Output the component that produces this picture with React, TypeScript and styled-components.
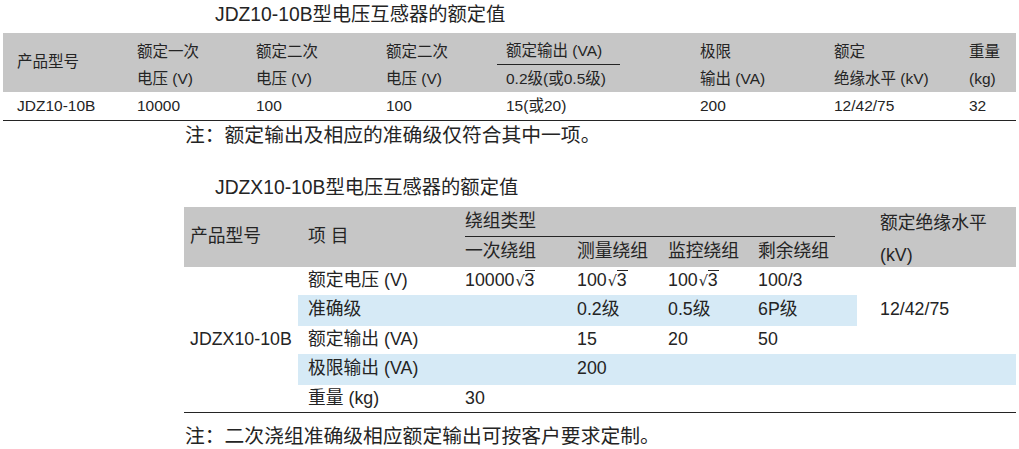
import React from "react";
import styled, { createGlobalStyle } from "styled-components";

const Global = createGlobalStyle`
  html, body { margin: 0; padding: 0; background: #ffffff; }
  body {
    font-family: "Liberation Sans", "Noto Sans CJK SC", sans-serif;
    color: #242424;
  }
`;

const GRAY = "#c6c6c6";
const BLUE = "#d6eaf6";
const INK = "#242424";

const Page = styled.div`
  width: 1019px;
  display: flex;
  flex-direction: column;
  & > * {
    flex-shrink: 0;
  }
`;

const Title = styled.div<{ $top: number; $h: number }>`
  box-sizing: border-box;
  height: ${(p) => p.$h}px;
  padding-top: ${(p) => p.$top}px;
  padding-left: 215px;
  font-size: 19.3px;
  line-height: 28px;
  white-space: nowrap;
`;

const Note = styled.div<{ $top: number; $h: number }>`
  box-sizing: border-box;
  height: ${(p) => p.$h}px;
  padding-top: ${(p) => p.$top}px;
  padding-left: 185px;
  font-size: 19.8px;
  line-height: 28px;
  white-space: nowrap;
`;

const Table = styled.table<{ $left: number; $w: number; $fs: number }>`
  margin-left: ${(p) => p.$left}px;
  width: ${(p) => p.$w}px;
  border-collapse: collapse;
  border-spacing: 0;
  table-layout: fixed;
  font-size: ${(p) => p.$fs}px;
  border-bottom: 1px solid ${INK};
`;

const HeadRow = styled.tr<{ $h: number }>`
  height: ${(p) => p.$h}px;
  background: ${GRAY};
`;

const Row = styled.tr<{ $h: number }>`
  height: ${(p) => p.$h}px;
`;

const Cell = styled.td<{ $pl?: number; $pr?: number; $pt?: number; $bg?: string }>`
  padding: ${(p) => p.$pt ?? 0}px ${(p) => p.$pr ?? 0}px 0 ${(p) => p.$pl ?? 10}px;
  vertical-align: middle;
  text-align: left;
  white-space: nowrap;
  font-weight: normal;
  line-height: 1.2;
  background: ${(p) => p.$bg ?? "transparent"};
`;

const Lines = styled.div<{ $lh: number; $mb?: number }>`
  display: flex;
  flex-direction: column;
  line-height: ${(p) => p.$lh}px;
  margin-bottom: ${(p) => p.$mb ?? 0}px;
`;

const Ruled = styled.div<{ $w?: number }>`
  width: ${(p) => (p.$w ? `${p.$w}px` : "auto")};
  border-bottom: 1px solid ${INK};
`;

const Indented = styled.div<{ $pl: number }>`
  padding-left: ${(p) => p.$pl}px;
`;

const Topline = styled.div`
  line-height: 29px;
  border-bottom: 1px solid ${INK};
`;

const Radical = styled.span`
  white-space: nowrap;
`;

const RadSign = styled.span`
  font-family: "DejaVu Sans", sans-serif;
  font-size: 0.8em;
  margin-left: 1px;
`;

const Radicand = styled.span`
  display: inline-block;
  border-top: 1px solid ${INK};
  line-height: 1.05;
  padding-right: 1px;
`;

const Sqrt: React.FC<{ n: string }> = ({ n }) => (
  <Radical>
    <RadSign>√</RadSign>
    <Radicand>{n}</Radicand>
  </Radical>
);

const T1 = [124, 119, 130, 121, 193, 134, 135, 57];
const T2 = [114, 157, 112, 91, 90, 109, 159];

export default function App() {
  return (
    <Page>
      <Global />
      <Title $top={1} $h={33}>JDZ10-10B型电压互感器的额定值</Title>

      <Table $left={3} $w={1013} $fs={15.5}>
        <colgroup>
          {T1.map((w, i) => (
            <col key={i} style={{ width: w }} />
          ))}
        </colgroup>
        <tbody>
          <HeadRow $h={59}>
            <Cell $pl={14}>产品型号</Cell>
            <Cell $pt={4}>
              <Lines $lh={27}>
                <span>额定一次</span>
                <span>电压 (V)</span>
              </Lines>
            </Cell>
            <Cell $pt={4}>
              <Lines $lh={27}>
                <span>额定二次</span>
                <span>电压 (V)</span>
              </Lines>
            </Cell>
            <Cell $pt={4}>
              <Lines $lh={27}>
                <span>额定二次</span>
                <span>电压 (V)</span>
              </Lines>
            </Cell>
            <Cell $pl={0} $pt={4}>
              <Lines $lh={27}>
                <Ruled $w={123}>
                  <Indented $pl={9}>额定输出 (VA)</Indented>
                </Ruled>
                <Indented $pl={9}>0.2级(或0.5级)</Indented>
              </Lines>
            </Cell>
            <Cell $pt={4}>
              <Lines $lh={27}>
                <span>极限</span>
                <span>输出 (VA)</span>
              </Lines>
            </Cell>
            <Cell $pt={4}>
              <Lines $lh={27}>
                <span>额定</span>
                <span>绝缘水平 (kV)</span>
              </Lines>
            </Cell>
            <Cell $pt={4}>
              <Lines $lh={27}>
                <span>重量</span>
                <span>(kg)</span>
              </Lines>
            </Cell>
          </HeadRow>
          <Row $h={28}>
            <Cell $pl={14} $pt={2}>JDZ10-10B</Cell>
            <Cell $pt={2}>10000</Cell>
            <Cell $pt={2}>100</Cell>
            <Cell $pt={2}>100</Cell>
            <Cell $pl={9} $pt={2}>15(或20)</Cell>
            <Cell $pt={2}>200</Cell>
            <Cell $pt={2}>12/42/75</Cell>
            <Cell $pt={2}>32</Cell>
          </Row>
        </tbody>
      </Table>

      <Note $top={0} $h={28}>注：额定输出及相应的准确级仅符合其中一项。</Note>

      <Title $top={25} $h={58}>JDZX10-10B型电压互感器的额定值</Title>

      <Table $left={184} $w={832} $fs={17.8}>
        <colgroup>
          {T2.map((w, i) => (
            <col key={i} style={{ width: w }} />
          ))}
        </colgroup>
        <tbody>
          <HeadRow $h={30}>
            <Cell rowSpan={2} $pl={6}>产品型号</Cell>
            <Cell rowSpan={2}>项 目</Cell>
            <Cell colSpan={4} $pr={22}>
              <Topline>绕组类型</Topline>
            </Cell>
            <Cell rowSpan={2} $pl={23}>
              <Lines $lh={32} $mb={-4}>
                <span>额定绝缘水平</span>
                <span>(kV)</span>
              </Lines>
            </Cell>
          </HeadRow>
          <HeadRow $h={30}>
            <Cell>一次绕组</Cell>
            <Cell>测量绕组</Cell>
            <Cell>监控绕组</Cell>
            <Cell>剩余绕组</Cell>
          </HeadRow>
          <Row $h={28}>
            <Cell rowSpan={5} $pl={6}>JDZX10-10B</Cell>
            <Cell>额定电压 (V)</Cell>
            <Cell>
              10000
              <Sqrt n="3" />
            </Cell>
            <Cell>
              100
              <Sqrt n="3" />
            </Cell>
            <Cell>
              100
              <Sqrt n="3" />
            </Cell>
            <Cell>100/3</Cell>
            <Cell rowSpan={3} $pl={23}>12/42/75</Cell>
          </Row>
          <Row $h={31}>
            <Cell $bg={BLUE}>准确级</Cell>
            <Cell $bg={BLUE} />
            <Cell $bg={BLUE}>0.2级</Cell>
            <Cell $bg={BLUE}>0.5级</Cell>
            <Cell $bg={BLUE}>6P级</Cell>
          </Row>
          <Row $h={28}>
            <Cell>额定输出 (VA)</Cell>
            <Cell />
            <Cell>15</Cell>
            <Cell>20</Cell>
            <Cell>50</Cell>
          </Row>
          <Row $h={31}>
            <Cell $bg={BLUE}>极限输出 (VA)</Cell>
            <Cell $bg={BLUE} />
            <Cell $bg={BLUE} colSpan={4}>200</Cell>
          </Row>
          <Row $h={28}>
            <Cell>重量 (kg)</Cell>
            <Cell>30</Cell>
            <Cell colSpan={4} />
          </Row>
        </tbody>
      </Table>

      <Note $top={9} $h={36}>注：二次浇组准确级相应额定输出可按客户要求定制。</Note>
    </Page>
  );
}
